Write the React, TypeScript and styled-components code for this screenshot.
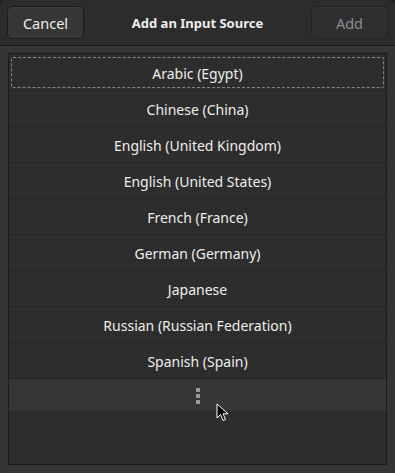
import { createGlobalStyle, styled } from "styled-components";

const GlobalStyle = createGlobalStyle`
  html, body {
    margin: 0;
    padding: 0;
    background: #1f1f1f;
  }
  body {
    font-family: "Noto Sans", "Open Sans", sans-serif;
    font-size: 14px;
    color: #eeeeec;
  }
`;

const Window = styled.div`
  position: relative;
  width: 395px;
  height: 473px;
  display: flex;
  flex-direction: column;
  background: #353535;
  border-radius: 8px 8px 0 0;
  overflow: hidden;
`;

const HeaderBar = styled.div`
  height: 46px;
  box-sizing: border-box;
  display: flex;
  align-items: center;
  justify-content: space-between;
  padding: 0 7px;
  background: #2c2c2c;
  border-bottom: 1px solid #1b1b1b;
`;

const Button = styled.button<{ disabled?: boolean }>`
  width: 77px;
  height: 33px;
  font-family: inherit;
  font-size: 14.5px;
  border-radius: 5px;
  border: 1px solid ${({ disabled }) => (disabled ? "#232323" : "#1c1c1c")};
  background: ${({ disabled }) => (disabled ? "#2f2f2f" : "#363636")};
  color: ${({ disabled }) => (disabled ? "#8b8e8f" : "#eeeeec")};
  box-shadow: inset 0 1px rgba(255, 255, 255, 0.03);
`;

const Title = styled.div`
  font-weight: 700;
  font-size: 13px;
  margin-top: 1px;
`;

const Content = styled.div`
  flex: 1;
  padding: 7px 8px 8px 8px;
  display: flex;
`;

const List = styled.div`
  flex: 1;
  border: 1px solid #1b1b1b;
  background: #2d2d2d;
  display: flex;
  flex-direction: column;
`;

const Row = styled.div<{ focused?: boolean }>`
  height: ${({ focused }) => (focused ? 37 : 36)}px;
  box-sizing: border-box;
  padding-top: 2px;
  border-bottom: 1px solid #262626;
  display: flex;
  align-items: center;
  justify-content: center;
  position: relative;
  &::after {
    content: "";
    display: ${({ focused }) => (focused ? "block" : "none")};
    position: absolute;
    inset: 3px 2px 2px 2px;
    border: 1px dashed #858585;
    border-radius: 2px;
  }
`;

const MoreRow = styled.div`
  height: 32px;
  background: #363636;
  display: flex;
  align-items: center;
  justify-content: center;
`;

const Dots = styled.div`
  display: flex;
  flex-direction: column;
  gap: 2px;
  margin-top: 1px;
  span {
    width: 4px;
    height: 4px;
    background: #9a9a9a;
  }
`;

const Pointer = styled.svg`
  position: absolute;
  left: 216px;
  top: 403px;
`;

const sources = [
  "Arabic (Egypt)",
  "Chinese (China)",
  "English (United Kingdom)",
  "English (United States)",
  "French (France)",
  "German (Germany)",
  "Japanese",
  "Russian (Russian Federation)",
  "Spanish (Spain)",
];

export default function App() {
  return (
    <>
      <GlobalStyle />
      <Window>
        <HeaderBar>
          <Button>Cancel</Button>
          <Title>Add an Input Source</Title>
          <Button disabled>Add</Button>
        </HeaderBar>
        <Content>
          <List>
            {sources.map((s, i) => (
              <Row key={s} focused={i === 0}>
                {s}
              </Row>
            ))}
            <MoreRow>
              <Dots>
                <span />
                <span />
                <span />
              </Dots>
            </MoreRow>
          </List>
        </Content>
        <Pointer width="14" height="20" viewBox="0 0 14 20">
          <path
            d="M1 1 L1 15 L4.5 11.5 L7 17.5 L9.5 16.5 L7 10.8 L12 10.8 Z"
            fill="#000"
            stroke="#fff"
            strokeWidth="1"
            strokeLinejoin="round"
          />
        </Pointer>
      </Window>
    </>
  );
}
